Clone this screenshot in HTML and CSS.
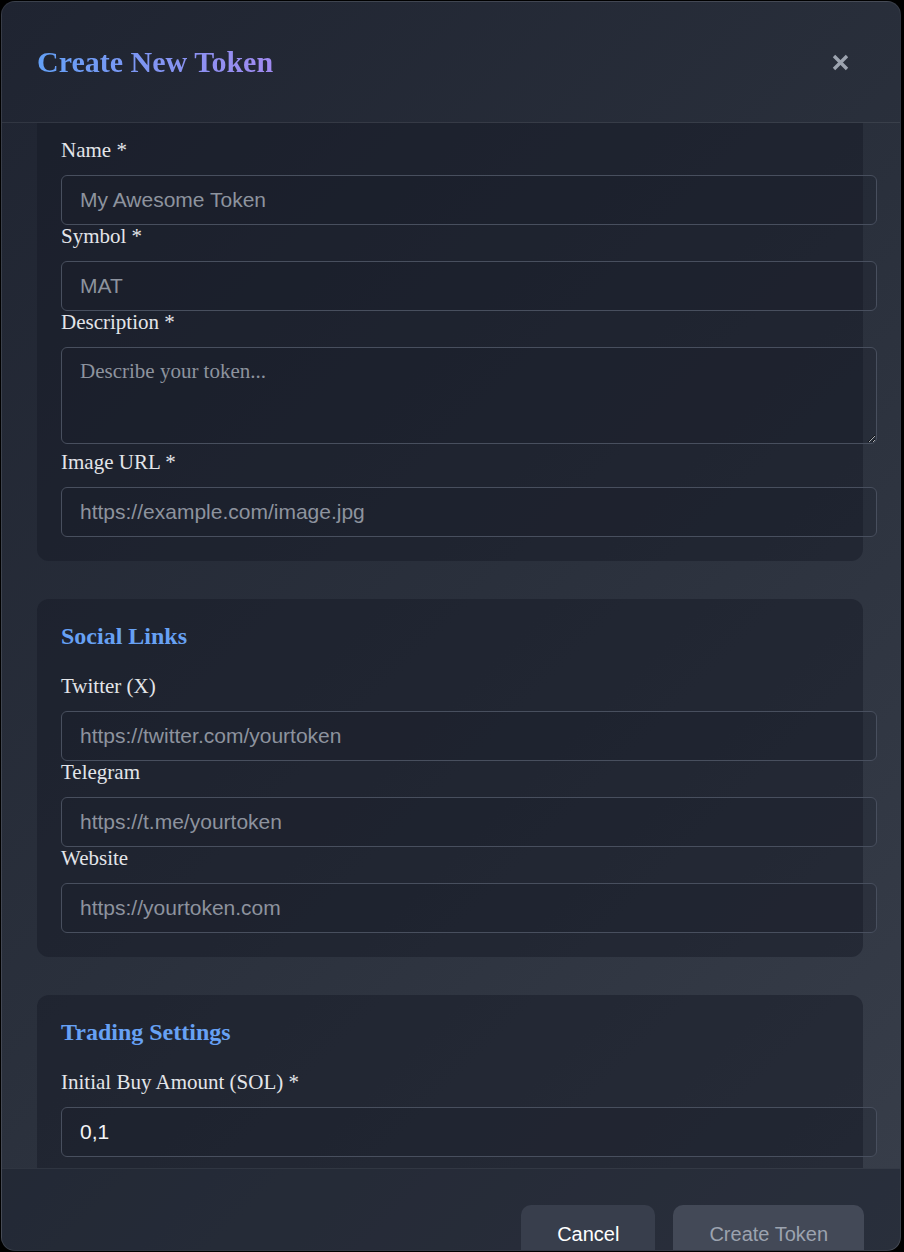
FILE: index.html
```html
<!DOCTYPE html>
<html lang="en">
<head>
<meta charset="utf-8">
<title>Create New Token</title>
<link rel="stylesheet" href="styles.css">
</head>
<body>
<div class="modal">
  <header class="modal-header">
    <h2 class="modal-title">Create New Token</h2>
    <button class="close-btn" aria-label="Close">
      <svg width="17" height="17" viewBox="0 0 17 17"><path d="M2 2 L15 15 M15 2 L2 15" stroke="#9ca3af" stroke-width="3.4" fill="none"/></svg>
    </button>
  </header>
  <div class="modal-body">
    <section class="card card-first">
      <div class="field">
        <label class="label">Name *</label>
        <input class="input" type="text" placeholder="My Awesome Token">
      </div>
      <div class="field">
        <label class="label">Symbol *</label>
        <input class="input" type="text" placeholder="MAT">
      </div>
      <div class="field">
        <label class="label">Description *</label>
        <textarea class="textarea" placeholder="Describe your token..."></textarea>
      </div>
      <div class="field">
        <label class="label">Image URL *</label>
        <input class="input" type="text" placeholder="https://example.com/image.jpg">
      </div>
    </section>
    <section class="card">
      <h3 class="card-title">Social Links</h3>
      <div class="field">
        <label class="label">Twitter (X)</label>
        <input class="input" type="text" placeholder="https://twitter.com/yourtoken">
      </div>
      <div class="field">
        <label class="label">Telegram</label>
        <input class="input" type="text" placeholder="https://t.me/yourtoken">
      </div>
      <div class="field">
        <label class="label">Website</label>
        <input class="input" type="text" placeholder="https://yourtoken.com">
      </div>
    </section>
    <section class="card">
      <h3 class="card-title">Trading Settings</h3>
      <div class="field">
        <label class="label">Initial Buy Amount (SOL) *</label>
        <input class="input" type="text" value="0,1">
      </div>
    </section>
  </div>
  <footer class="modal-footer">
    <button class="btn btn-cancel">Cancel</button>
    <button class="btn btn-create" disabled>Create Token</button>
  </footer>
</div>
</body>
</html>
```

FILE: styles.css
```css
html, body {
  margin: 0;
  padding: 0;
  background: #000;
}
body {
  padding: 1px;
  font-family: "Liberation Serif", "Times New Roman", serif;
}
.modal {
  box-sizing: border-box;
  width: 900px;
  height: 1250px;
  border: 1px solid rgba(255, 255, 255, 0.07);
  border-radius: 14px;
  overflow: hidden;
  display: flex;
  flex-direction: column;
  background: linear-gradient(135deg, #1f2431 0%, #2a303c 50%, #383e4a 100%);
}
.modal-header {
  flex: none;
  height: 120px;
  display: flex;
  align-items: center;
  justify-content: space-between;
  padding: 0 51px 0 35px;
  border-bottom: 1px solid rgba(255, 255, 255, 0.08);
}
.modal-title {
  margin: 0;
  font-size: 30px;
  font-weight: bold;
  background: linear-gradient(90deg, #63a0f6 0%, #a08af0 100%);
  -webkit-background-clip: text;
  background-clip: text;
  color: transparent;
}
.close-btn {
  background: none;
  border: 0;
  padding: 0;
  width: 17px;
  height: 17px;
  display: flex;
}
.modal-body {
  flex: none;
  height: 1045px;
  overflow: hidden;
  padding: 0 37px 0 35px;
}
.card {
  background: rgba(22, 26, 38, 0.5);
  border-radius: 12px;
  padding: 24px;
  margin-bottom: 38px;
}
.card-first {
  padding-top: 16px;
  border-top-left-radius: 0;
  border-top-right-radius: 0;
}
.card-title {
  margin: 0 0 25px;
  font-size: 24px;
  line-height: 27px;
  font-weight: bold;
  color: #67a1f4;
}
.label {
  display: block;
  font-size: 21px;
  line-height: 23px;
  margin-bottom: 13px;
  color: #e3e5e9;
}
.input, .textarea {
  display: block;
  box-sizing: content-box;
  width: 100%;
  margin: 0;
  padding: 12px 18px;
  border: 1px solid #484f5e;
  border-radius: 6px;
  background: rgba(24, 28, 40, 0.25);
  color: #f3f4f6;
  font-size: 21px;
  outline: none;
}
.input {
  font-family: "Liberation Sans", Arial, sans-serif;
  line-height: 24px;
  height: 24px;
}
.textarea {
  font-family: "Liberation Serif", "Times New Roman", serif;
  line-height: 23px;
  height: 71px;
  margin-bottom: 7px;
}
.input::placeholder, .textarea::placeholder {
  color: #8d939e;
  opacity: 1;
}
.modal-footer {
  flex: none;
  display: flex;
  justify-content: flex-end;
  gap: 18px;
  padding: 36px 36px 24px;
  border-top: 1px solid rgba(255, 255, 255, 0.06);
  background: rgba(30, 35, 48, 0.55);
}
.btn {
  font-family: "Liberation Sans", Arial, sans-serif;
  font-size: 20px;
  line-height: 24px;
  padding: 17px 36px;
  border: 0;
  border-radius: 10px;
}
.btn-cancel {
  background: #383e4c;
  color: #ffffff;
}
.btn-create {
  background: #434957;
  color: #9ca3af;
}
```
